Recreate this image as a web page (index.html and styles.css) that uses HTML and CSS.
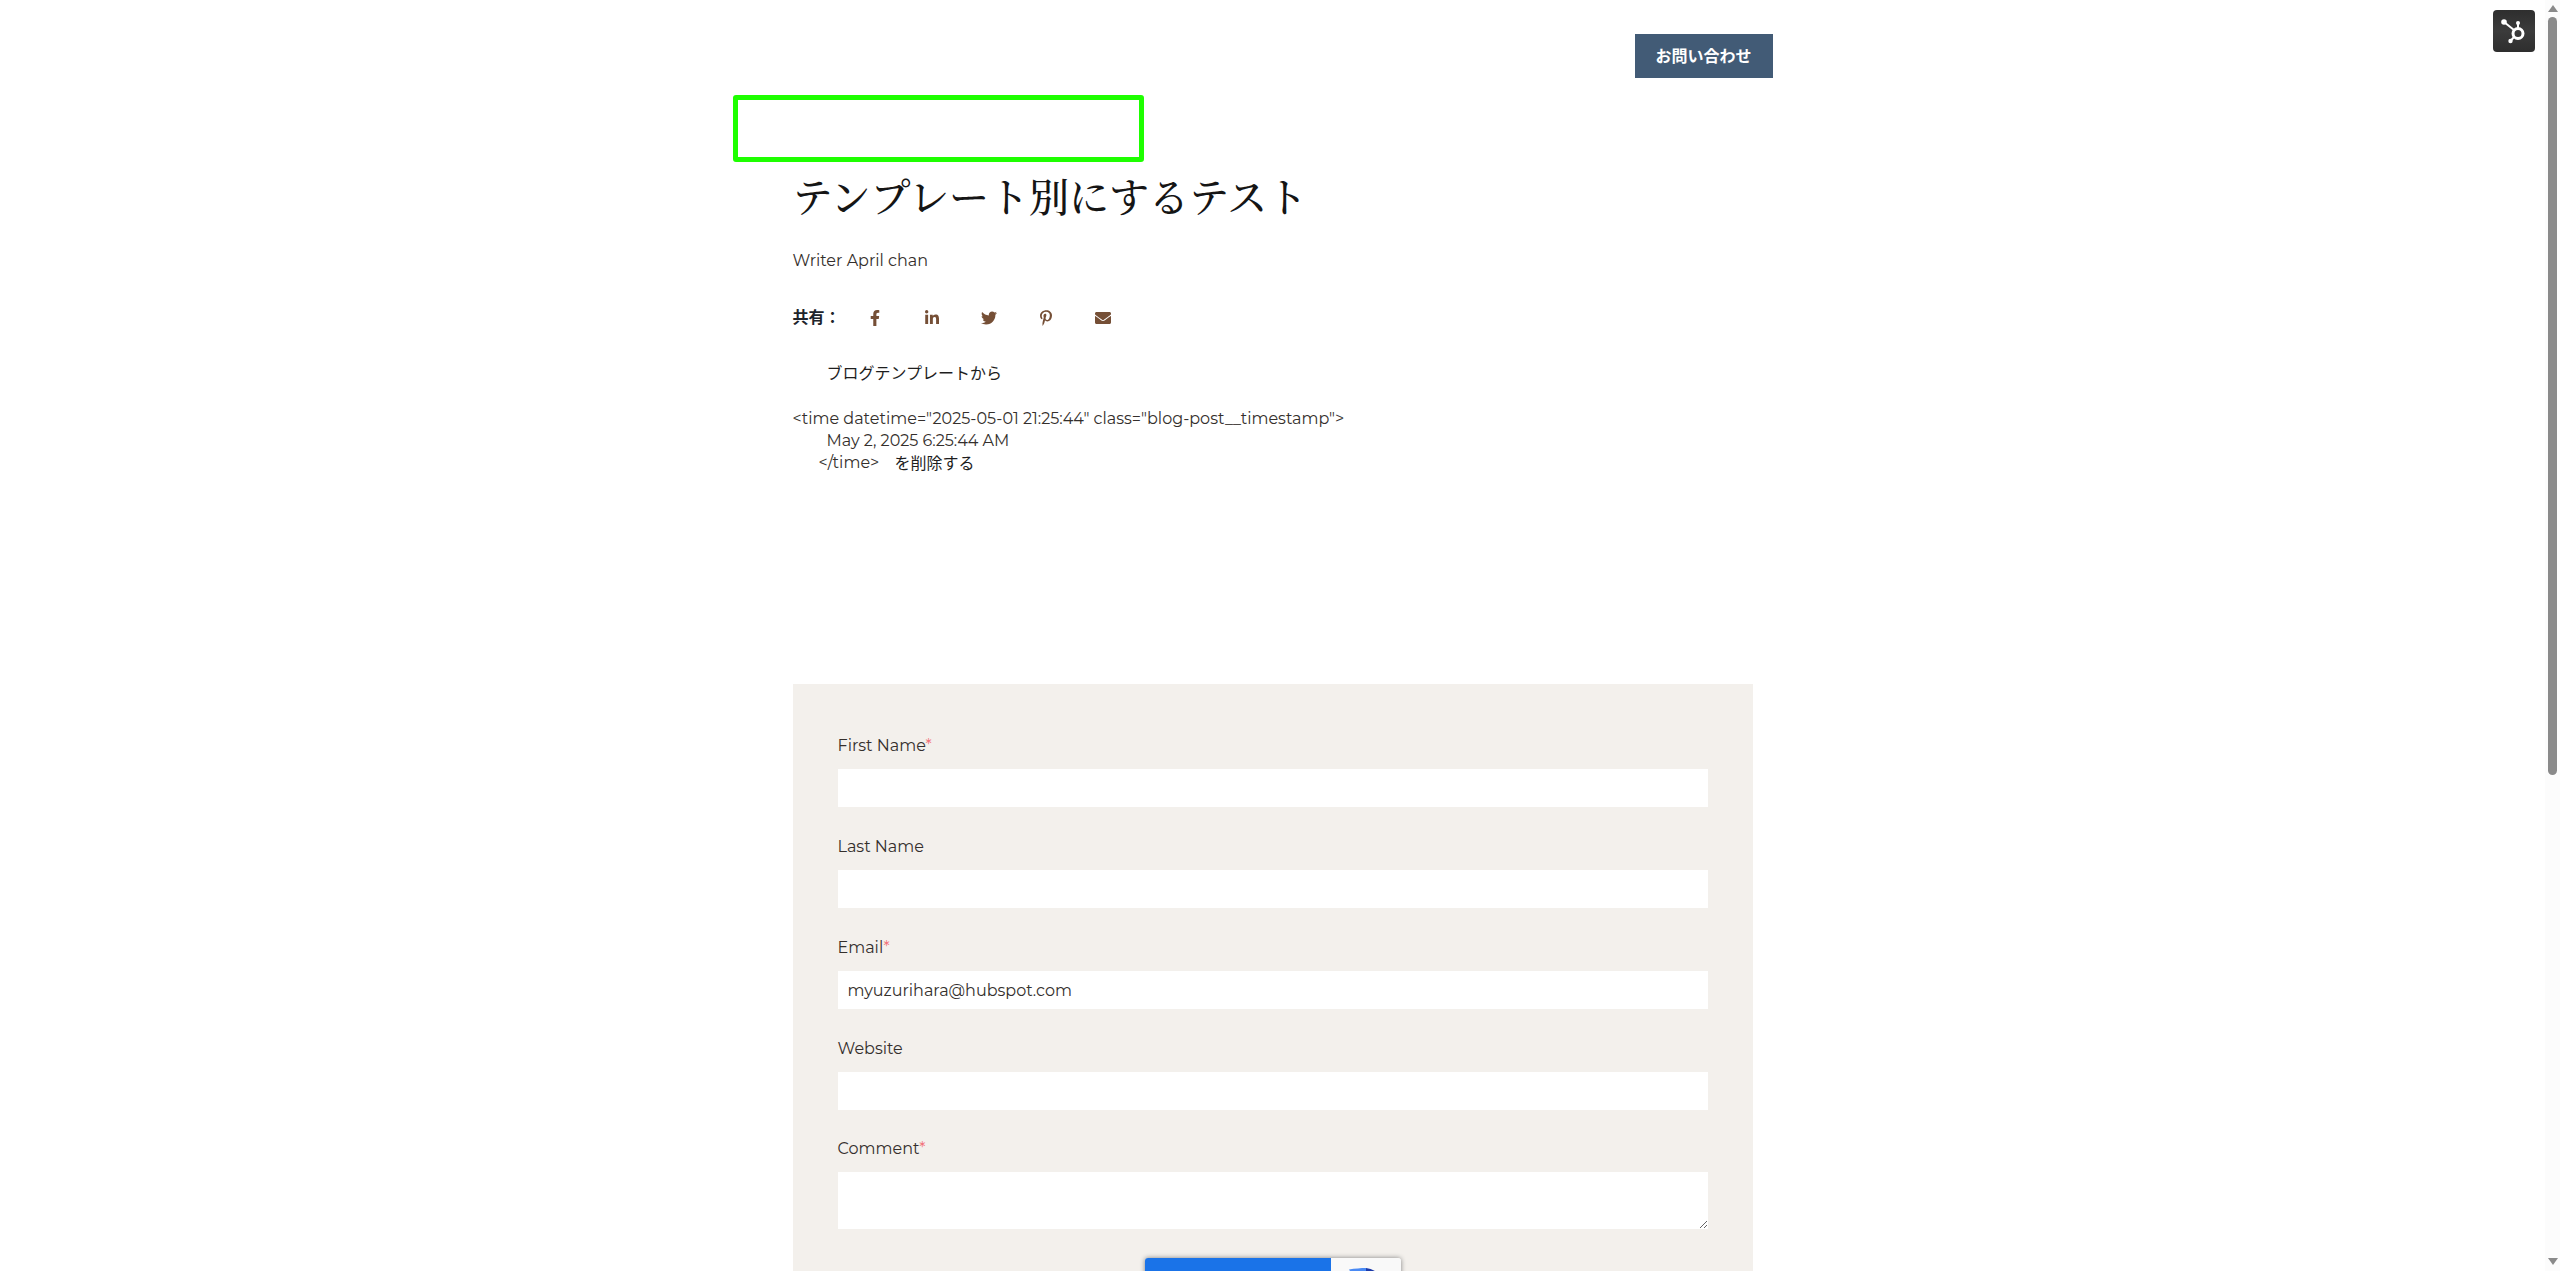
FILE: index.html
```html
<!DOCTYPE html>
<html lang="ja">
<head>
<meta charset="utf-8">
<title>テンプレート別にするテスト</title>
<link rel="stylesheet" href="styles.css">
</head>
<body>
<div class="page">
  <main class="viewport">
    <div class="container">
      <header class="site-header"><a class="cta" href="#">お問い合わせ</a></header>
      <div class="highlight"></div>
      <h1 class="title">テンプレート別にするテスト</h1>
      <p class="author">Writer April chan</p>
      <div class="share">
        <span class="share-label">共有：</span>
        <ul class="share-list">
          <li class="share-item"><svg class="ico ico-f" viewBox="0 0 320 512"><path d="M279.14 288l14.22-92.66h-88.91v-60.13c0-25.35 12.42-50.06 52.24-50.06h40.42V6.26S260.43 0 225.36 0c-73.22 0-121.08 44.38-121.08 124.72v70.62H22.89V288h81.39v224h100.17V288z"/></svg></li>
          <li class="share-item"><svg class="ico ico-in" viewBox="0 0 448 512"><path d="M100.28 448H7.4V148.9h92.88zM53.79 108.1C24.09 108.1 0 83.5 0 53.8a53.79 53.79 0 0 1 107.58 0c0 29.7-24.1 54.3-53.79 54.3zM447.9 448h-92.68V302.4c0-34.7-.7-79.2-48.29-79.2-48.29 0-55.69 37.7-55.69 76.7V448h-92.78V148.9h89.08v40.8h1.3c12.4-23.5 42.69-48.3 87.88-48.3 94 0 111.28 61.9 111.28 142.3V448z"/></svg></li>
          <li class="share-item"><svg class="ico ico-tw" viewBox="0 0 512 512"><path d="M459.37 151.716c.325 4.548.325 9.097.325 13.645 0 138.72-105.583 298.558-298.558 298.558-59.452 0-114.68-17.219-161.137-47.106 8.447.974 16.568 1.299 25.34 1.299 49.055 0 94.213-16.568 130.274-44.832-46.132-.975-84.792-31.188-98.112-72.772 6.498.974 12.995 1.624 19.818 1.624 9.421 0 18.843-1.3 27.614-3.573-48.081-9.747-84.143-51.98-84.143-102.985v-1.299c13.969 7.797 30.214 12.67 47.431 13.319-28.264-18.843-46.781-51.005-46.781-87.391 0-19.492 5.197-37.36 14.294-52.954 51.655 63.675 129.3 105.258 216.365 109.807-1.624-7.797-2.599-15.918-2.599-24.04 0-57.828 46.782-104.934 104.934-104.934 30.213 0 57.502 12.67 76.67 33.137 23.715-4.548 46.456-13.32 66.599-25.34-7.798 24.366-24.366 44.833-46.132 57.827 21.117-2.273 41.584-8.122 60.426-16.243-14.292 20.791-32.161 39.308-52.628 54.253z"/></svg></li>
          <li class="share-item"><svg class="ico ico-p" viewBox="0 0 384 512"><path d="M204 6.5C101.4 6.5 0 74.9 0 185.6 0 256 39.6 296 63.6 296c9.9 0 15.6-27.6 15.6-35.4 0-9.3-23.7-29.1-23.7-67.8 0-80.4 61.2-137.4 140.4-137.4 68.1 0 118.5 38.7 118.5 109.8 0 53.1-21.3 152.7-90.3 152.7-24.9 0-46.2-18-46.2-43.8 0-37.8 26.4-74.4 26.4-113.4 0-66.2-93.9-54.2-93.9 25.8 0 16.8 2.1 35.4 9.6 50.7-13.8 59.4-42 147.9-42 209.1 0 18.9 2.7 37.5 4.5 56.4 3.4 3.8 1.7 3.4 6.9 1.5 50.4-69 48.6-82.5 71.4-172.8 12.3 23.4 44.1 36 69.3 36 106.2 0 153.9-103.5 153.9-196.8C384 71.3 298.2 6.5 204 6.5z"/></svg></li>
          <li class="share-item"><svg class="ico ico-m" viewBox="0 0 512 512"><path d="M502.3 190.8c3.9-3.1 9.7-.2 9.7 4.7V400c0 26.5-21.5 48-48 48H48c-26.5 0-48-21.5-48-48V195.6c0-5 5.7-7.8 9.7-4.7 22.4 17.4 52.1 39.5 154.1 113.6 21.1 15.4 56.7 47.8 92.2 47.6 35.7.3 72-32.8 92.3-47.6 102-74.1 131.6-96.3 154-113.7zM256 320c23.2.4 56.6-29.2 73.4-41.4 132.7-96.3 142.8-104.7 173.4-128.7 5.8-4.5 9.2-11.5 9.2-18.9v-19c0-26.5-21.5-48-48-48H48C21.5 64 0 85.5 0 112v19c0 7.4 3.4 14.3 9.2 18.9 30.6 23.9 40.7 32.4 173.4 128.7 16.8 12.2 50.2 41.8 73.4 41.4z"/></svg></li>
        </ul>
      </div>
      <div class="post-body">
        <p class="line indent jp">ブログテンプレートから</p>
        <p class="line code first-code">&lt;time datetime="2025-05-01 21:25:44" class="blog-post__timestamp"&gt;</p>
        <p class="line indent code date">May 2, 2025 6:25:44 AM</p>
        <p class="line close-row"><span class="code close-tag">&lt;/time&gt;</span><span class="jp close-jp">を削除する</span></p>
      </div>
      <form class="comment-form">
        <div class="field">
          <label class="label" for="fn">First Name<span class="req">*</span></label>
          <input class="control" id="fn" type="text">
        </div>
        <div class="field">
          <label class="label" for="ln">Last Name</label>
          <input class="control" id="ln" type="text">
        </div>
        <div class="field">
          <label class="label" for="em">Email<span class="req">*</span></label>
          <input class="control" id="em" type="email" value="myuzurihara@hubspot.com">
        </div>
        <div class="field field-tight">
          <label class="label" for="ws">Website</label>
          <input class="control" id="ws" type="text">
        </div>
        <div class="field field-last">
          <label class="label" for="cm">Comment<span class="req">*</span></label>
          <textarea class="control area" id="cm"></textarea>
        </div>
        <div class="captcha">
          <div class="captcha-main"></div>
          <div class="captcha-logo">
            <svg class="captcha-svg" viewBox="0 0 28 28"><path class="cap-light" d="M0 1.5 C6 .5 12 0 17 0 L17 8 L4 8z"/><path class="cap-dark" d="M17 0 C21 .5 25 2 28 4.5 L28 12 L17 12z"/></svg>
          </div>
        </div>
      </form>
    </div>
  </main>
  <aside class="scrollbar">
    <span class="arrow arrow-up"></span>
    <span class="thumb"></span>
    <span class="arrow arrow-down"></span>
  </aside>
</div>
<div class="hs-badge">
  <svg class="hs-icon" viewBox="0 0 42 42">
    <circle class="hs-fill" cx="11" cy="12" r="2.8"/>
    <circle class="hs-fill" cx="25" cy="13" r="2"/>
    <circle class="hs-fill" cx="17.5" cy="31" r="2.2"/>
    <path class="hs-stroke" d="M11 12 L21 20 M25 13 V18 M17.5 31 L21 27"/>
    <circle class="hs-ring" cx="25" cy="23.5" r="5"/>
  </svg>
</div>
</body>
</html>
```
FILE: styles.css
```css
* { box-sizing: border-box; }
html, body { margin: 0; padding: 0; background: #fff; }
body {
  font-family: "Montserrat", Inter, "Noto Sans CJK JP", sans-serif;
  font-size: 16px;
  color: #342f2c;
}
.page { display: flex; height: 1271px; overflow: hidden; }
.viewport { flex: 1; min-width: 0; }
.container { width: 1000px; margin: 0 auto; padding: 0 20px; }

.site-header { display: flex; justify-content: flex-end; padding-top: 34px; margin-right: -20px; }
.cta {
  display: flex; align-items: center; justify-content: center;
  width: 138px; height: 44px; padding-bottom: 2px;
  background: #425b76; color: #fff;
  font-family: "Noto Sans CJK JP", sans-serif;
  font-weight: 700; font-size: 16px; text-decoration: none;
}
.highlight {
  width: 411px; height: 67px; margin: 17px 0 0 -60px;
  border: 5px solid #1eff00; border-radius: 3px;
}
.title {
  margin: 9px 0 0;
  font-family: "Noto Serif CJK JP", "Source Han Serif", "Liberation Serif", "Noto Sans CJK JP", serif;
  font-weight: 500; font-size: 40px; line-height: 48px; color: #151515;
}
.author { margin: 31px 0 0; font-size: 16px; line-height: 22px; }
.share { display: flex; align-items: center; height: 24px; margin-top: 33px; }
.share-label {
  width: 54px; padding-bottom: 2px; font-family: "Noto Sans CJK JP", sans-serif;
  font-weight: 700; font-size: 16px; color: #20242b;
}
.share-list { display: flex; margin: 0; padding: 0; list-style: none; }
.share-item { display: flex; justify-content: center; align-items: center; width: 57px; height: 24px; padding-top: 2px; }
.ico { display: block; height: 16px; fill: #754f36; }
.ico-f { width: 10px; }
.ico-in { width: 14px; }
.ico-tw { width: 16px; }
.ico-p { width: 12px; }
.ico-m { width: 16px; }

.post-body { margin-top: 32px; }
.line { margin: 0; line-height: 22px; white-space: nowrap; }
.indent { margin-left: 34px; }
.jp { font-family: "Noto Sans CJK JP", sans-serif; font-size: 16px; color: #1e1e1e; }
.code { font-size: 16px; }
.first-code { margin-top: 25px; }
.close-row { display: flex; padding-left: 26px; }
.close-tag { width: 76px; }
.close-jp { margin-top: -1px; }

.comment-form {
  width: 960px; margin: 210px 0 0; padding: 49px 45px 60px;
  background: #f3f0ec;
}
.field { display: flex; flex-direction: column; margin-bottom: 27px; }
.field-tight { margin-bottom: 26px; }
.field-last { margin-bottom: 29px; }
.label { padding-top: 1px; font-size: 16px; line-height: 24px; margin-bottom: 11px; }
.req { color: #f2727a; }
.control {
  display: block; width: 100%; height: 38px; padding: 0 10px;
  border: 0; border-radius: 0; outline: 0; background: #fff;
  font-family: inherit; font-size: 16px; color: #342f2c;
}
.area { height: 57px; resize: vertical; }
.captcha {
  display: flex; width: 256px; height: 60px; margin: 0 auto;
  border-radius: 3px; overflow: hidden;
  box-shadow: 0 0 5px #808080;
}
.captcha-main { width: 186px; background: #1a73e8; }
.captcha-logo { flex: 1; background: #f9f9f9; padding: 10px 0 0 18px; }
.captcha-svg { display: block; width: 28px; height: 28px; }
.cap-light { fill: #4a8af4; }
.cap-dark { fill: #1c3aa9; }

.scrollbar {
  flex: 0 0 15px; display: flex; flex-direction: column; align-items: center;
  background: #fcfcfc;
}
.arrow { width: 0; height: 0; border-left: 5px solid transparent; border-right: 5px solid transparent; }
.arrow-up { margin-top: 5px; border-bottom: 7px solid #8a8a8a; }
.arrow-down { margin-top: 483px; border-top: 7px solid #8a8a8a; }
.thumb { width: 9px; height: 758px; margin-top: 5px; border-radius: 5px; background: #8a8a8a; }

.hs-badge {
  position: absolute; left: 2493px; top: 10px;
  width: 42px; height: 42px; border-radius: 4px;
  background: linear-gradient(#2e2e2e, #3b3b3b 50%, #2e2e2e);
}
.hs-icon { display: block; width: 42px; height: 42px; }
.hs-fill { fill: #fff; }
.hs-stroke { fill: none; stroke: #fff; stroke-width: 2; }
.hs-ring { fill: none; stroke: #fff; stroke-width: 3; }
```
